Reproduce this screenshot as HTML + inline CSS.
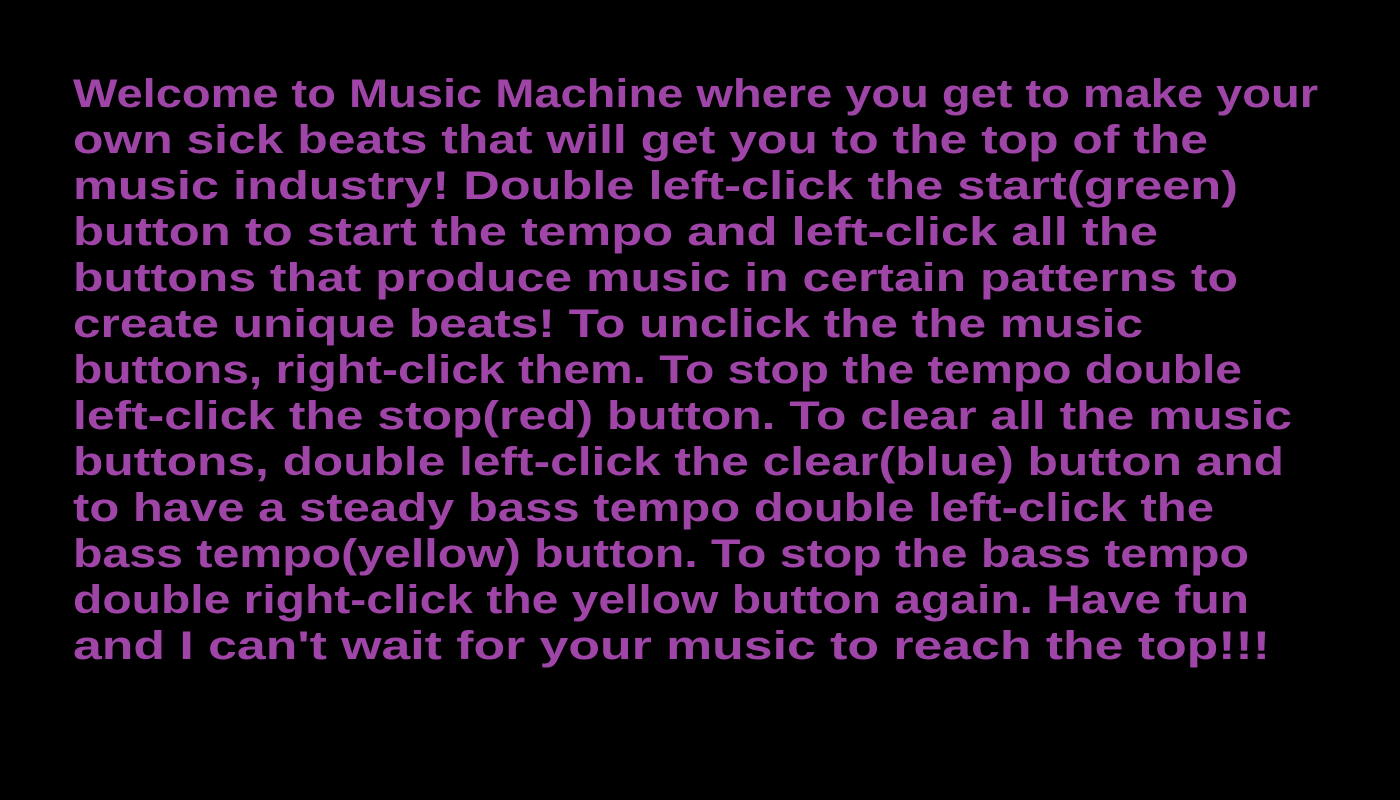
<!DOCTYPE html>
<html><head><meta charset="utf-8"><style>
html,body{margin:0;padding:0;background:#000;width:1400px;height:800px;overflow:hidden}
svg{display:block}
text{font-family:"Liberation Sans",sans-serif;font-weight:bold;font-size:40px;fill:#a045a8}
</style></head><body>
<svg width="1400" height="800" xmlns="http://www.w3.org/2000/svg">
<text x="73" y="107" textLength="1245" lengthAdjust="spacingAndGlyphs">Welcome to Music Machine where you get to make your</text>
<text x="73" y="153" textLength="1135" lengthAdjust="spacingAndGlyphs">own sick beats that will get you to the top of the</text>
<text x="73" y="199" textLength="1165" lengthAdjust="spacingAndGlyphs">music industry! Double left-click the start(green)</text>
<text x="73" y="245" textLength="1085" lengthAdjust="spacingAndGlyphs">button to start the tempo and left-click all the</text>
<text x="73" y="291" textLength="1165" lengthAdjust="spacingAndGlyphs">buttons that produce music in certain patterns to</text>
<text x="73" y="337" textLength="1070" lengthAdjust="spacingAndGlyphs">create unique beats! To unclick the the music</text>
<text x="73" y="383" textLength="1169" lengthAdjust="spacingAndGlyphs">buttons, right-click them. To stop the tempo double</text>
<text x="73" y="429" textLength="1219" lengthAdjust="spacingAndGlyphs">left-click the stop(red) button. To clear all the music</text>
<text x="73" y="475" textLength="1211" lengthAdjust="spacingAndGlyphs">buttons, double left-click the clear(blue) button and</text>
<text x="73" y="521" textLength="1141" lengthAdjust="spacingAndGlyphs">to have a steady bass tempo double left-click the</text>
<text x="73" y="567" textLength="1176" lengthAdjust="spacingAndGlyphs">bass tempo(yellow) button. To stop the bass tempo</text>
<text x="73" y="613" textLength="1176" lengthAdjust="spacingAndGlyphs">double right-click the yellow button again. Have fun</text>
<text x="73" y="659" textLength="1197" lengthAdjust="spacingAndGlyphs">and I can't wait for your music to reach the top!!!</text>
</svg>
</body></html>
